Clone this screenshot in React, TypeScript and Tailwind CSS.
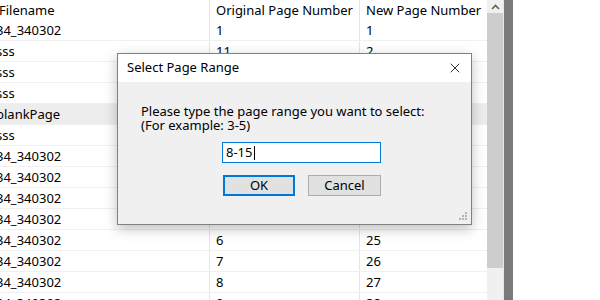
import { X } from "lucide-react";

const rows = [
  { name: "34_340302", orig: "1", next: "1" },
  { name: "sss", orig: "11", next: "2" },
  { name: "sss", orig: "", next: "" },
  { name: "sss", orig: "", next: "" },
  { name: "blankPage", orig: "", next: "", selected: true },
  { name: "sss", orig: "", next: "" },
  { name: "34_340302", orig: "", next: "" },
  { name: "34_340302", orig: "", next: "" },
  { name: "34_340302", orig: "", next: "" },
  { name: "34_340302", orig: "", next: "" },
  { name: "34_340302", orig: "6", next: "25" },
  { name: "34_340302", orig: "7", next: "26" },
  { name: "34_340302", orig: "8", next: "27" },
  { name: "34_340302", orig: "9", next: "28" },
];

function Grip() {
  return (
    <svg width="9" height="9" viewBox="0 0 9 9" className="absolute right-[3px] bottom-[3px]">
      {[[6, 0], [3, 3], [6, 3], [0, 6], [3, 6], [6, 6]].map(([x, y], i) => (
        <rect key={i} x={x} y={y} width="2" height="2" fill="#b4b4b4" />
      ))}
    </svg>
  );
}

export default function App() {
  return (
    <div className="relative w-[600px] h-[300px] overflow-hidden bg-white text-[13px] text-black font-['Noto_Sans',sans-serif] leading-none">
      <div className="flex h-full">
        <div className="w-[487px] overflow-hidden">
          <div className="flex h-[20px] items-center">
            <div className="w-[210px] shrink-0 border-r border-[#e5e5e5] h-full flex items-center overflow-hidden">
              <span className="-ml-[1px] whitespace-nowrap">Filename</span>
            </div>
            <div className="w-[150px] shrink-0 border-r border-[#e5e5e5] h-full flex items-center pl-[6px] whitespace-nowrap">Original Page Number</div>
            <div className="flex-1 h-full flex items-center pl-[6px] whitespace-nowrap">New Page Number</div>
          </div>
          {rows.map((r, i) => (
            <div
              key={i}
              className={`flex h-[21px] border-b border-[#f0f0f0] ${r.selected ? "bg-[#ededed]" : ""}`}
            >
              <div className="w-[210px] shrink-0 border-r border-[#e5e5e5] flex items-center overflow-hidden">
                <span className="-ml-[4px] whitespace-nowrap">{r.name}</span>
              </div>
              <div className="w-[150px] shrink-0 border-r border-[#e5e5e5] flex items-center pl-[6px]">{r.orig}</div>
              <div className="flex-1 flex items-center pl-[6px]">{r.next}</div>
            </div>
          ))}
        </div>
        <div className="w-[16px] bg-[#f0f0f0] flex flex-col">
          <div className="h-[13px] flex items-center justify-center">
            <svg width="9" height="6" viewBox="0 0 9 6">
              <path d="M1 5 L4.5 1.5 L8 5" stroke="#606060" strokeWidth="1.6" fill="none" />
            </svg>
          </div>
          <div className="h-[255px] bg-[#cdcdcd]" />
        </div>
        <div className="w-[10px] bg-[#7a7a7a] border-l border-[#e8e8e8]" />
        <div className="flex-1 bg-white" />
      </div>

      <div className="absolute left-[117px] top-[53px] w-[355px] h-[172px] border border-[#808080] bg-[#f0f0f0] shadow-[0_4px_12px_rgba(0,0,0,0.25)] flex flex-col">
        <div className="h-[28px] bg-white flex items-center justify-between pl-[9px] pr-[8px]">
          <span className="-mt-[1px]">Select Page Range</span>
          <X size={16} strokeWidth={1.2} className="text-black" />
        </div>
        <div className="flex flex-col pl-[23px] pt-[22px]">
          <p className="leading-[14px]">Please type the page range you want to select:</p>
          <p className="leading-[14px]">(For example: 3-5)</p>
          <div className="ml-[81px] mt-[10px] w-[159px] h-[21px] border border-[#0078d7] bg-white flex items-center pl-[3px]">
            8-15<span className="inline-block w-px h-[14px] bg-black ml-px" />
          </div>
          <div className="ml-[82px] mt-[12px] flex gap-[13px]">
            <button className="w-[72px] h-[21px] border-2 border-[#0078d7] bg-[#e1e1e1] flex items-center justify-center">OK</button>
            <button className="w-[73px] h-[21px] border border-[#adadad] bg-[#e1e1e1] flex items-center justify-center">Cancel</button>
          </div>
        </div>
        <Grip />
      </div>
    </div>
  );
}
